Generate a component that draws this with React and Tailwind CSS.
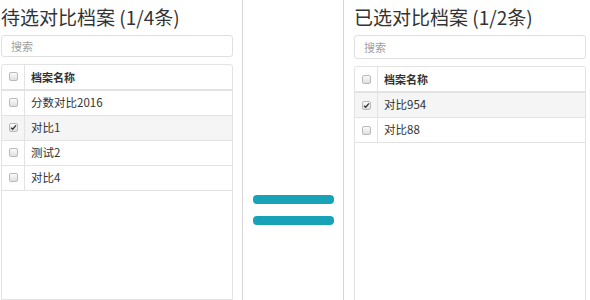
import { useState } from "react";

function Check({ checked }) {
  return (
    <span className="flex h-[9px] w-[9px] items-center justify-center rounded-[2px] border border-[#b9b9b9] bg-gradient-to-b from-[#fbfbfb] to-[#e0e0e0]">
      {checked && (
        <svg viewBox="0 0 8 8" className="h-[7px] w-[7px]">
          <path d="M1.2 4.2 L3.1 6 L6.8 1.6" fill="none" stroke="#333" strokeWidth="1.5" />
        </svg>
      )}
    </span>
  );
}

function Panel({ title, rows }) {
  return (
    <div className="flex w-[232px] flex-col">
      <h2 className="h-[30px] pt-[3px] text-[19px] leading-[28px] text-[#333]">{title}</h2>
      <input
        placeholder="搜索"
        className="mt-[5px] h-[24px] w-full rounded-[3px] border border-[#e0e0e0] px-[9px] text-[11px] text-[#333] placeholder:text-[#a0a0a0] outline-none"
      />
      <div className="mt-[7px] h-[260px] rounded-t-[3px] border border-[#e3e3e3]">
        <div className="flex h-[26px] border-b-2 border-[#e3e3e3]">
          <div className="flex w-[23px] items-center justify-center border-r border-[#e3e3e3]">
            <Check />
          </div>
          <div className="flex items-center pl-[6px] text-[11px] font-bold text-[#333]">档案名称</div>
        </div>
        {rows.map((r) => (
          <div key={r.name} className={`flex h-[25px] border-b border-[#e3e3e3] ${r.checked ? "bg-[#f5f5f5]" : ""}`}>
            <div className="flex w-[23px] items-center justify-center border-r border-[#e3e3e3]">
              <Check checked={r.checked} />
            </div>
            <div className="flex items-center pl-[6px] text-[11.5px] text-[#333]">{r.name}</div>
          </div>
        ))}
      </div>
    </div>
  );
}

export default function App() {
  const [left] = useState([
    { name: "分数对比2016", checked: false },
    { name: "对比1", checked: true },
    { name: "测试2", checked: false },
    { name: "对比4", checked: false },
  ]);
  const [right] = useState([
    { name: "对比954", checked: true },
    { name: "对比88", checked: false },
  ]);

  return (
    <div className="flex h-[300px] w-[590px] overflow-hidden bg-white pl-px font-['Liberation_Sans_Narrow','Noto_Sans_CJK_SC',sans-serif]">
      <Panel title="待选对比档案 (1/4条)" rows={left} />
      <div className="ml-[9px] flex w-[102px] flex-col items-center gap-[12px] border-x border-[#d6d6d6] pt-[195px]">
        <button className="h-[9px] w-[81px] rounded-[4px] bg-[#17a2b8]"></button>
        <button className="h-[9px] w-[81px] rounded-[4px] bg-[#17a2b8]"></button>
      </div>
      <div className="ml-[10px]">
        <Panel title="已选对比档案 (1/2条)" rows={right} />
      </div>
    </div>
  );
}
